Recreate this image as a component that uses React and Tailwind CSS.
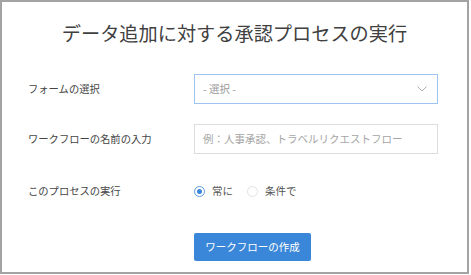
import React from "react";

const font = {fontFamily: '"Noto Sans CJK JP", "Noto Sans", sans-serif'};

const Radio = ({checked, label}) => (
	<label className="flex items-center gap-[7px]">
		<span
			className={
				checked
					? "flex h-[11px] w-[11px] items-center justify-center rounded-full border border-[#5b9be0] bg-white"
					: "flex h-[11px] w-[11px] items-center justify-center rounded-full border border-[#e2e2e2] bg-white"
			}
		>
			{checked && <span className="h-[5px] w-[5px] rounded-full bg-[#3a86d8]"/>}
		</span>
		<span className="text-[10.5px] text-[#555]">{label}</span>
	</label>
);

const Row = ({label, children, className = ""}) => (
	<div className={"flex items-center " + className}>
		<div className="w-[192px] shrink-0 pl-[26px] text-[10.3px] text-[#444]">{label}</div>
		<div className="flex-1">{children}</div>
	</div>
);

const App = () => {
	return (
		<div className="h-[275px] w-[471px] bg-white" style={font}>
			<div className="flex h-[274px] w-[469px] flex-col border-2 border-[#a3a3a3] bg-white">
				<h1 className="pt-[19px] text-center text-[19.2px] leading-[24px] font-normal text-[#404040]">
					データ追加に対する承認プロセスの実行
				</h1>
				
				<Row label="フォームの選択" className="mt-[29px] h-[30px]">
					<div className="flex h-[30px] w-[244px] items-center justify-between border border-[#9ec3ef] pl-[8px] pr-[10px]">
						<span className="text-[10.5px] text-[#9a9a9a]">- 選択 -</span>
						<svg width="10" height="6" viewBox="0 0 10 6" fill="none">
							<polyline points="0.5,0.5 5,5 9.5,0.5" stroke="#b0b0b0" strokeWidth="1"/>
						</svg>
					</div>
				</Row>
				
				<Row label="ワークフローの名前の入力" className="mt-[20px] h-[30px]">
					<div className="flex h-[30px] w-[244px] items-center border border-[#dddddd] pl-[8px]">
						<span className="text-[10.5px] text-[#a5a5a5]">例：人事承認、トラベルリクエストフロー</span>
					</div>
				</Row>
				
				<Row label="このプロセスの実行" className="mt-[22px] h-[30px]">
					<div className="flex items-center gap-[14px]">
						<Radio checked label="常に"/>
						<Radio label="条件で"/>
					</div>
				</Row>
				
				<div className="mt-[27px] flex pl-[192px]">
					<button className="h-[28px] w-[117px] rounded-[2px] bg-[#3a87d9] text-[10.5px] text-white">
						ワークフローの作成
					</button>
				</div>
			</div>
		</div>
	);
};

export default App;
